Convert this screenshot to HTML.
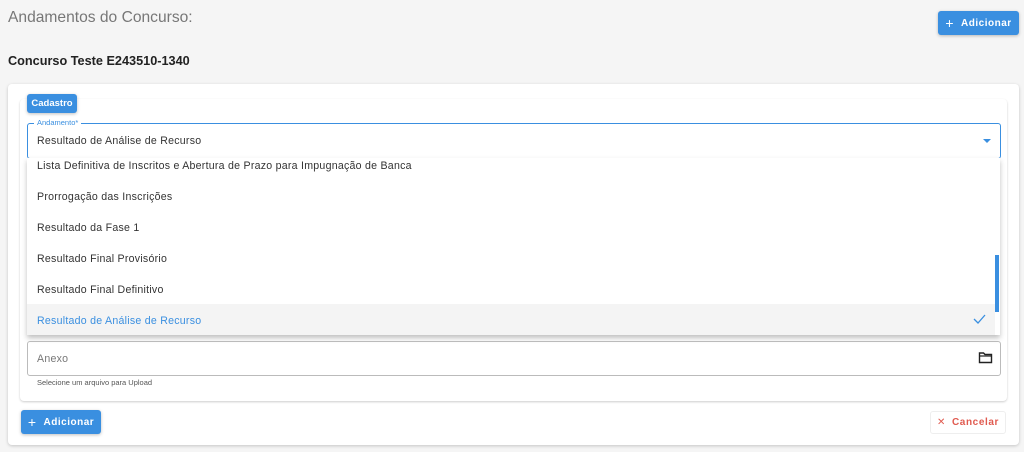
<!DOCTYPE html>
<html><head><style>
*{box-sizing:border-box;margin:0;padding:0}
body{width:1024px;height:452px;background:#f5f5f5;font-family:"Liberation Sans",sans-serif;position:relative;overflow:hidden;color:#333}
.abs{position:absolute}
.btn{position:absolute;background:#3a8fe0;color:#fff;border-radius:3px;font-size:10px;font-weight:bold;display:flex;align-items:center;justify-content:center;letter-spacing:.5px;box-shadow:0 1px 3px rgba(0,0,0,.25)}
.opt{position:absolute;left:10px;font-size:10.6px;color:#333;letter-spacing:.25px}
</style></head><body>
<div class="abs" style="left:8px;top:9px;font-size:15.6px;color:#777">Andamentos do Concurso:</div>
<div class="btn" style="left:938px;top:11px;width:81px;height:24px"><span style="font-size:14px;margin-right:7px;font-weight:normal">+</span>Adicionar</div>
<div class="abs" style="left:8px;top:54px;font-size:12.7px;font-weight:bold;color:#222">Concurso Teste E243510-1340</div>
<div class="abs" style="left:8px;top:84px;width:1011px;height:361px;background:#fff;border-radius:4px;box-shadow:0 1px 3px rgba(0,0,0,.2)"></div>
<div class="abs" style="left:20px;top:99px;width:987px;height:302px;background:#fff;border-radius:4px;box-shadow:0 1px 2px rgba(0,0,0,.2)"></div>
<div class="btn" style="left:27px;top:94px;width:50px;height:19px;font-size:9.5px;letter-spacing:0">Cadastro</div>
<div class="abs" style="left:27px;top:123px;width:974px;height:36px;border:1px solid #3a8fe0;border-radius:3px;background:#fff"></div>
<div class="abs" style="left:34px;top:118px;font-size:7.5px;color:#3a8fe0;background:#fff;padding:0 3px">Andamento*</div>
<div class="abs" style="left:37px;top:135px;font-size:10.6px;color:#333;letter-spacing:.25px">Resultado de Análise de Recurso</div>
<div class="abs" style="left:983px;top:139px;width:0;height:0;border-left:4px solid transparent;border-right:4px solid transparent;border-top:4px solid #3a8fe0"></div>
<div class="abs" style="left:27px;top:158px;width:973px;height:177px;background:#fff;box-shadow:0 3px 5px rgba(0,0,0,.25);overflow:hidden">
<div class="opt" style="top:2px">Lista Definitiva de Inscritos e Abertura de Prazo para Impugnação de Banca</div>
<div class="opt" style="top:33px">Prorrogação das Inscrições</div>
<div class="opt" style="top:64px">Resultado da Fase 1</div>
<div class="opt" style="top:95px">Resultado Final Provisório</div>
<div class="opt" style="top:126px">Resultado Final Definitivo</div>
<div class="abs" style="left:0;top:146px;width:968px;height:31px;background:#f4f4f4"></div>
<div class="opt" style="top:157px;color:#3a8fe0">Resultado de Análise de Recurso</div>
<svg class="abs" style="left:945px;top:155px" width="14" height="12"><path d="M2 6l4 4 7-8" stroke="#3a8fe0" stroke-width="1.3" fill="none"/></svg>
<div class="abs" style="left:968px;top:97px;width:4px;height:57px;background:#3a8fe0"></div>
</div>
<div class="abs" style="left:27px;top:341px;width:974px;height:35px;border:1px solid #bbb;border-radius:3px"></div>
<div class="abs" style="left:37px;top:353px;font-size:10.6px;color:#777;letter-spacing:.25px">Anexo</div>
<svg class="abs" style="left:978px;top:351px" width="15" height="13"><path d="M1.5 2h4l1.5 1.5h6.5v8h-12z" stroke="#222" stroke-width="1.4" fill="none"/><path d="M1.5 5h12" stroke="#222" stroke-width="1.2"/></svg>
<div class="abs" style="left:37px;top:378px;font-size:7.5px;color:#555">Selecione um arquivo para Upload</div>
<div class="btn" style="left:21px;top:410px;width:80px;height:24px"><span style="font-size:14px;margin-right:7px;font-weight:normal">+</span>Adicionar</div>
<div class="abs" style="left:930px;top:411px;width:76px;height:23px;border:1px solid #eee;border-radius:3px;color:#e05a4f;font-size:10px;font-weight:bold;display:flex;align-items:center;justify-content:center;letter-spacing:.6px"><span style="font-weight:normal;margin-right:6px">✕</span>Cancelar</div>
</body></html>
